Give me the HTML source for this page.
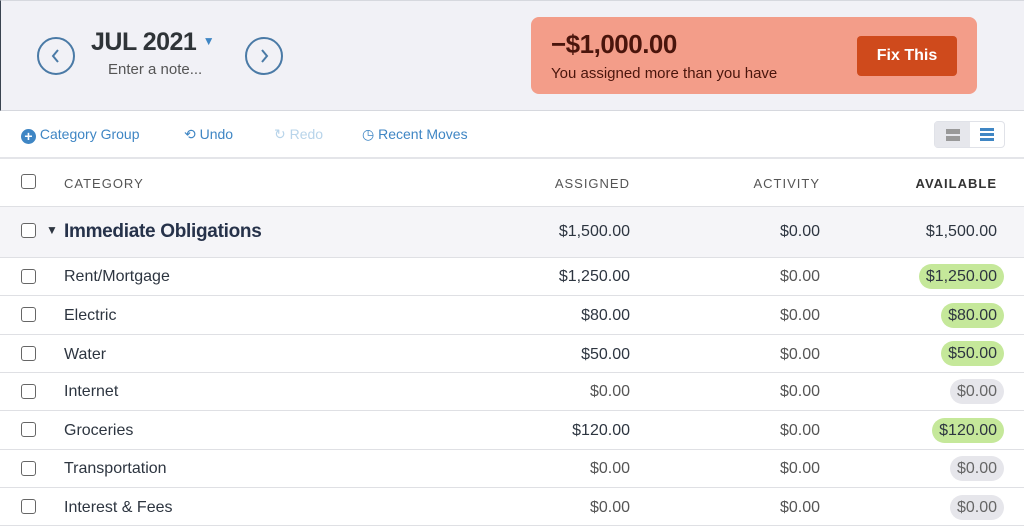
<!DOCTYPE html>
<html><head><style>
*{margin:0;padding:0;box-sizing:border-box}
body{width:1024px;height:524px;overflow:hidden;background:#fff;font-family:"Liberation Sans",sans-serif;color:#2d3540;position:relative}
.top{position:absolute;left:0;top:0;width:1024px;height:111px;background:#f1f1f6;border-top:1px solid #d6d8de;border-bottom:1px solid #d6d8de;border-left:1px solid #3a4350}
.circ{position:absolute;width:38px;height:38px;border:2.5px solid #4a7aa6;border-radius:50%}
.circ svg{position:absolute;left:9px;top:9px}
.month{position:absolute;left:90px;top:27px;font-size:25px;font-weight:bold;color:#2f3438;letter-spacing:-0.5px}
.note{position:absolute;left:107px;top:60px;font-size:15px;color:#555}
.alert{position:absolute;left:530px;top:16px;width:446px;height:77px;background:#f39d89;border-radius:8px}
.amt{position:absolute;left:20px;top:12px;font-size:26px;font-weight:bold;color:#4a150c;letter-spacing:-0.5px}
.msg{position:absolute;left:20px;top:48px;font-size:15px;color:#4a150c}
.fix{position:absolute;left:326px;top:19px;width:100px;height:40px;background:#cf4a1c;border-radius:4px;color:#fff;font-weight:bold;font-size:16px;text-align:center;line-height:40px}
.tb{position:absolute;top:126px;font-size:14px;color:#3f86c4}
.vt{position:absolute;left:934px;top:121px;width:71px;height:27px;border:1px solid #e0e2e8;border-radius:4px;background:#fff}
.row{position:absolute;left:0;width:1024px;border-bottom:1px solid #dfe0e4}
.cb{position:absolute;left:21px;width:15px;height:15px;border:1.5px solid #666;border-radius:3px;background:#fff}
.c{position:absolute;font-size:16px}
.r{text-align:right}
.pill{position:absolute;right:20px;height:25px;line-height:25px;padding:0 7px;border-radius:13px;font-size:16px}
.g{background:#c5e89a}.n{background:#e6e6eb;color:#666}
</style></head><body>
<div class="top">
<div class="circ" style="left:36px;top:36px"><svg width="16" height="16" viewBox="0 0 16 16"><path d="M10 2 L5 8 L10 14" fill="none" stroke="#4a7aa6" stroke-width="2"/></svg></div>
<div class="month">JUL 2021 <span style="font-size:12px;color:#3f86c4;vertical-align:5px">▼</span></div>
<div class="note">Enter a note...</div>
<div class="circ" style="left:244px;top:36px"><svg width="16" height="16" viewBox="0 0 16 16"><path d="M6 2 L11 8 L6 14" fill="none" stroke="#4a7aa6" stroke-width="2"/></svg></div>
<div class="alert"><div class="amt">−$1,000.00</div><div class="msg">You assigned more than you have</div><div class="fix">Fix This</div></div>
</div>
<div class="tb" style="left:21px"><span style="display:inline-block;width:15px;height:15px;border-radius:50%;background:#3f86c4;color:#fff;font-size:14px;line-height:15px;text-align:center;font-weight:bold;vertical-align:-2px">+</span> Category Group</div>
<div class="tb" style="left:184px">⟲ Undo</div>
<div class="tb" style="left:274px;color:#b8d4ea">↻ Redo</div>
<div class="tb" style="left:362px">◷ Recent Moves</div>
<div class="vt"><div style="position:absolute;left:0;top:0;width:35px;height:25px;background:#e6e7ec"></div>
<div style="position:absolute;left:11px;top:7px;width:14px;height:5px;background:#999"></div><div style="position:absolute;left:11px;top:14px;width:14px;height:5px;background:#999"></div>
<div style="position:absolute;left:45px;top:6px;width:14px;height:2.5px;background:#3f86c4;box-shadow:0 5px 0 #3f86c4,0 10px 0 #3f86c4"></div></div>
<div class="row" style="top:157px;height:50px;border-top:2px solid #e4e5e9">
<div class="cb" style="top:15px"></div>
<div class="c" style="left:64px;top:17px;font-size:13px;letter-spacing:1px;color:#555">CATEGORY</div>
<div class="c r" style="right:394px;top:17px;font-size:13px;letter-spacing:1px;color:#555">ASSIGNED</div>
<div class="c r" style="right:204px;top:17px;font-size:13px;letter-spacing:1px;color:#555">ACTIVITY</div>
<div class="c r" style="right:27px;top:17px;font-size:13px;letter-spacing:1px;color:#333;font-weight:bold">AVAILABLE</div>
</div>
<div class="row" style="top:207px;height:51px;background:#f5f5f8">
<div class="cb" style="top:16px"></div>
<div class="c" style="left:46px;top:16px;font-size:12px">▼</div>
<div class="c" style="left:64px;top:14px;font-size:19px;font-weight:bold;color:#26324a;letter-spacing:-0.3px">Immediate Obligations</div>
<div class="c r" style="right:394px;top:16px">$1,500.00</div>
<div class="c r" style="right:204px;top:16px">$0.00</div>
<div class="c r" style="right:27px;top:16px">$1,500.00</div>
</div>
<div class="row" style="top:258px;height:38px"><div class="cb" style="top:11px"></div><div class="c" style="left:64px;top:10px">Rent/Mortgage</div><div class="c r" style="right:394px;top:10px">$1,250.00</div><div class="c r" style="right:204px;top:10px;color:#555">$0.00</div><div class="pill g" style="top:6px">$1,250.00</div></div>
<div class="row" style="top:296px;height:39px"><div class="cb" style="top:11px"></div><div class="c" style="left:64px;top:11px">Electric</div><div class="c r" style="right:394px;top:11px">$80.00</div><div class="c r" style="right:204px;top:11px;color:#555">$0.00</div><div class="pill g" style="top:7px">$80.00</div></div>
<div class="row" style="top:335px;height:38px"><div class="cb" style="top:11px"></div><div class="c" style="left:64px;top:11px">Water</div><div class="c r" style="right:394px;top:11px">$50.00</div><div class="c r" style="right:204px;top:11px;color:#555">$0.00</div><div class="pill g" style="top:6px">$50.00</div></div>
<div class="row" style="top:373px;height:38px"><div class="cb" style="top:11px"></div><div class="c" style="left:64px;top:10px">Internet</div><div class="c r" style="right:394px;top:10px;color:#555">$0.00</div><div class="c r" style="right:204px;top:10px;color:#555">$0.00</div><div class="pill n" style="top:6px">$0.00</div></div>
<div class="row" style="top:411px;height:39px"><div class="cb" style="top:11px"></div><div class="c" style="left:64px;top:11px">Groceries</div><div class="c r" style="right:394px;top:11px">$120.00</div><div class="c r" style="right:204px;top:11px;color:#555">$0.00</div><div class="pill g" style="top:7px">$120.00</div></div>
<div class="row" style="top:450px;height:38px"><div class="cb" style="top:11px"></div><div class="c" style="left:64px;top:10px">Transportation</div><div class="c r" style="right:394px;top:10px;color:#555">$0.00</div><div class="c r" style="right:204px;top:10px;color:#555">$0.00</div><div class="pill n" style="top:6px">$0.00</div></div>
<div class="row" style="top:488px;height:38px"><div class="cb" style="top:11px"></div><div class="c" style="left:64px;top:11px">Interest &amp; Fees</div><div class="c r" style="right:394px;top:11px;color:#555">$0.00</div><div class="c r" style="right:204px;top:11px;color:#555">$0.00</div><div class="pill n" style="top:7px">$0.00</div></div>
</body></html>
